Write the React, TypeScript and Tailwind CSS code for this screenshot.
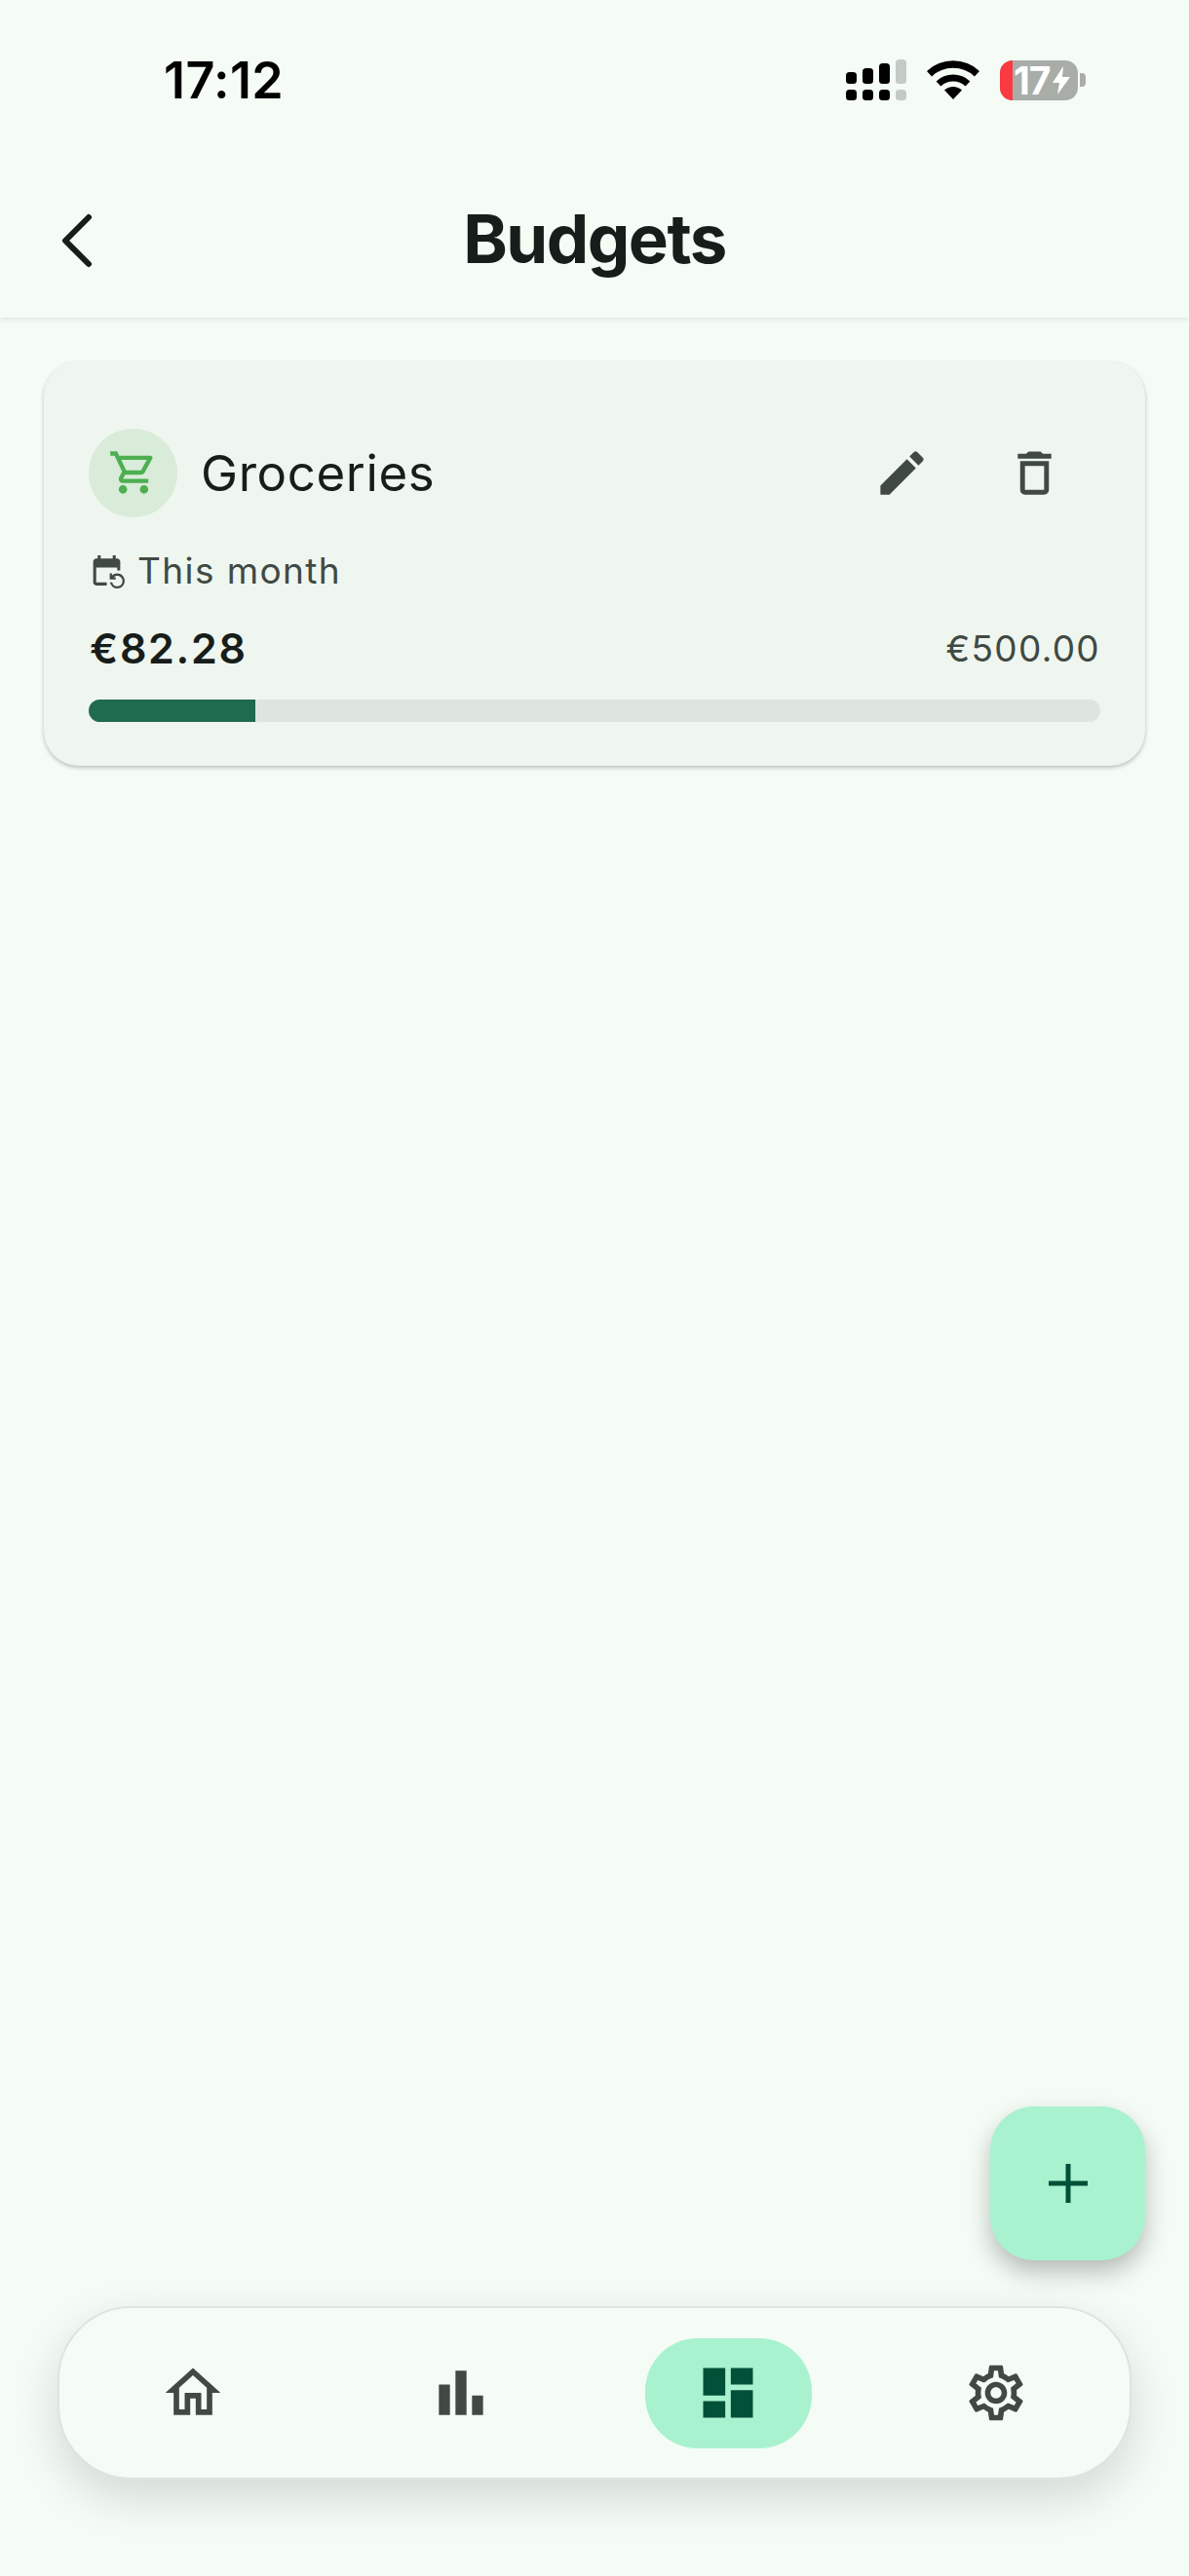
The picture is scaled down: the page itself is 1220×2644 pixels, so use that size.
import React from 'react';
import {
  MdBarChart,
  MdDashboard,
  MdDeleteOutline,
  MdEdit,
  MdEventRepeat,
  MdOutlineHome,
  MdOutlineSettings,
  MdOutlineShoppingCart,
} from 'react-icons/md';

const SignalIcon = () => (
  <svg width="62" height="42" viewBox="0 0 62 42">
    <rect x="0" y="13" width="11" height="12" rx="3.5" fill="#000" />
    <rect x="17" y="9" width="11" height="16" rx="3.5" fill="#000" />
    <rect x="34" y="4" width="11" height="21" rx="3.5" fill="#000" />
    <rect x="51" y="0" width="11" height="25" rx="3.5" fill="#c4cac5" />
    <rect x="0" y="31" width="11" height="11" rx="3.5" fill="#000" />
    <rect x="17" y="31" width="11" height="11" rx="3.5" fill="#000" />
    <rect x="34" y="31" width="11" height="11" rx="3.5" fill="#000" />
    <rect x="51" y="31" width="11" height="11" rx="3.5" fill="#c4cac5" />
  </svg>
);

const WifiIcon = () => (
  <svg width="54" height="40" viewBox="0 0 54 40" fill="none">
    <path d="M2.5 13.7A36 36 0 0 1 51.5 13.7" stroke="#000" strokeWidth="7.5" />
    <path d="M12 24A22 22 0 0 1 42 24" stroke="#000" strokeWidth="7" />
    <path d="M27 40L18 30.5A13 13 0 0 1 36 30.5Z" fill="#000" />
  </svg>
);

const Battery = () => (
  <div className="flex items-center">
    <div className="flex h-[41px] w-[80px] rounded-[13px] bg-[#a9ada8]">
      <div className="h-full w-[13px] rounded-l-[13px] bg-[#fb3a41]" />
      <span className="ml-[1px] text-[39px] leading-[41px] font-bold tracking-[-1px] text-white">17</span>
      <svg className="mt-[6px] ml-[2px]" width="18" height="29" viewBox="0 0 18 29">
        <path d="M11 0L0 17h7L5 29 18 11h-8z" fill="#fff" />
      </svg>
    </div>
    <div className="ml-[2px] h-[14px] w-[6px] rounded-r-[4px] bg-[#a9ada8]" />
  </div>
);

const NavItem = ({ children, active }: { children: React.ReactNode; active?: boolean }) => (
  <div className="flex items-center justify-center">
    <div
      className={
        active
          ? 'flex h-[113px] w-[171px] items-center justify-center rounded-[54px] bg-[#a9f2d0] text-[#005138]'
          : 'flex h-[113px] w-[171px] items-center justify-center text-[#404943]'
      }
    >
      {children}
    </div>
  </div>
);

export default function App() {
  return (
    <div className="flex h-[2644px] w-[1220px] flex-col overflow-hidden bg-[#f5fcf5] font-['Inter',sans-serif] text-[#171d1a]">
      <header className="h-[326px] shrink-0 bg-[#f5fcf5] shadow-[0_2px_6px_rgba(0,0,0,0.09)]">
        <div className="flex h-[165px] items-start justify-between pt-[57px] pr-[106px] pl-[168px]">
          <span className="text-[52px] leading-[52px] font-semibold tracking-[0.4px] text-black">17:12</span>
          <div className="flex items-center gap-[21px] pt-[4px]">
            <SignalIcon />
            <WifiIcon />
            <Battery />
          </div>
        </div>
        <div className="relative flex h-[161px] items-center justify-center">
          <svg className="absolute top-[53px] left-[62px]" width="36" height="58" viewBox="0 0 36 58" fill="none">
            <path d="M29 5L5 29l24 24" stroke="#171d1a" strokeWidth="6" strokeLinecap="round" strokeLinejoin="round" />
          </svg>
          <h1 className="text-[69px] leading-none font-bold tracking-[-1.5px]">Budgets</h1>
        </div>
      </header>

      <main className="flex-1 px-[45px] pt-[45px]">
        <div className="h-[415px] rounded-[36px] bg-[#eff6ef] px-[46px] pt-[69px] shadow-[0_2px_4px_rgba(0,0,0,0.24)]">
          <div className="flex h-[90px] items-center">
            <div className="flex h-[91px] w-[91px] items-center justify-center rounded-full bg-[#d9ebd9]">
              <MdOutlineShoppingCart className="text-[#4caf50]" size={52} />
            </div>
            <span className="ml-[24px] text-[51px] leading-none tracking-[0.6px]">Groceries</span>
            <div className="ml-auto flex items-center pr-[38px] text-[#404943]">
              <MdEdit size={59} />
              <MdDeleteOutline className="ml-[77px]" size={59} />
            </div>
          </div>
          <div className="mt-[34px] flex h-[42px] items-center text-[#404943]">
            <MdEventRepeat size={37} />
            <span className="ml-[13px] text-[37px] leading-none tracking-[1.4px]">This month</span>
          </div>
          <div className="mt-[37px] flex h-[44px] items-center justify-between pl-[1px]">
            <span className="text-[43px] leading-none font-semibold tracking-[1.7px]">€82.28</span>
            <span className="text-[37px] leading-none tracking-[1.3px] text-[#404943]">€500.00</span>
          </div>
          <div className="mt-[31px] h-[23px] w-[1038px] overflow-hidden rounded-full bg-[#dde5de]">
            <div className="h-full w-[171px] bg-[#1f6b4e]" />
          </div>
        </div>
      </main>

      <button className="mr-[45px] flex h-[158px] w-[159px] shrink-0 items-center justify-center self-end rounded-[45px] bg-[#a9f2d0] shadow-[0_12px_24px_rgba(0,0,0,0.26)]">
        <svg width="40" height="40" viewBox="0 0 40 40" fill="#005138">
          <rect x="17.5" y="0" width="5" height="40" />
          <rect x="0" y="17.5" width="40" height="5" />
        </svg>
      </button>

      <nav className="mt-[47px] mb-[99px] ml-[59px] grid h-[178px] w-[1102px] shrink-0 grid-cols-4 items-center rounded-[76px] border-2 border-[#dde5de] bg-[#f5fcf5] shadow-[0_18px_48px_rgba(0,0,0,0.14)]">
        <NavItem>
          <MdOutlineHome size={68} />
        </NavItem>
        <NavItem>
          <MdBarChart size={68} />
        </NavItem>
        <NavItem active>
          <MdDashboard size={68} />
        </NavItem>
        <NavItem>
          <MdOutlineSettings size={68} />
        </NavItem>
      </nav>
    </div>
  );
}
